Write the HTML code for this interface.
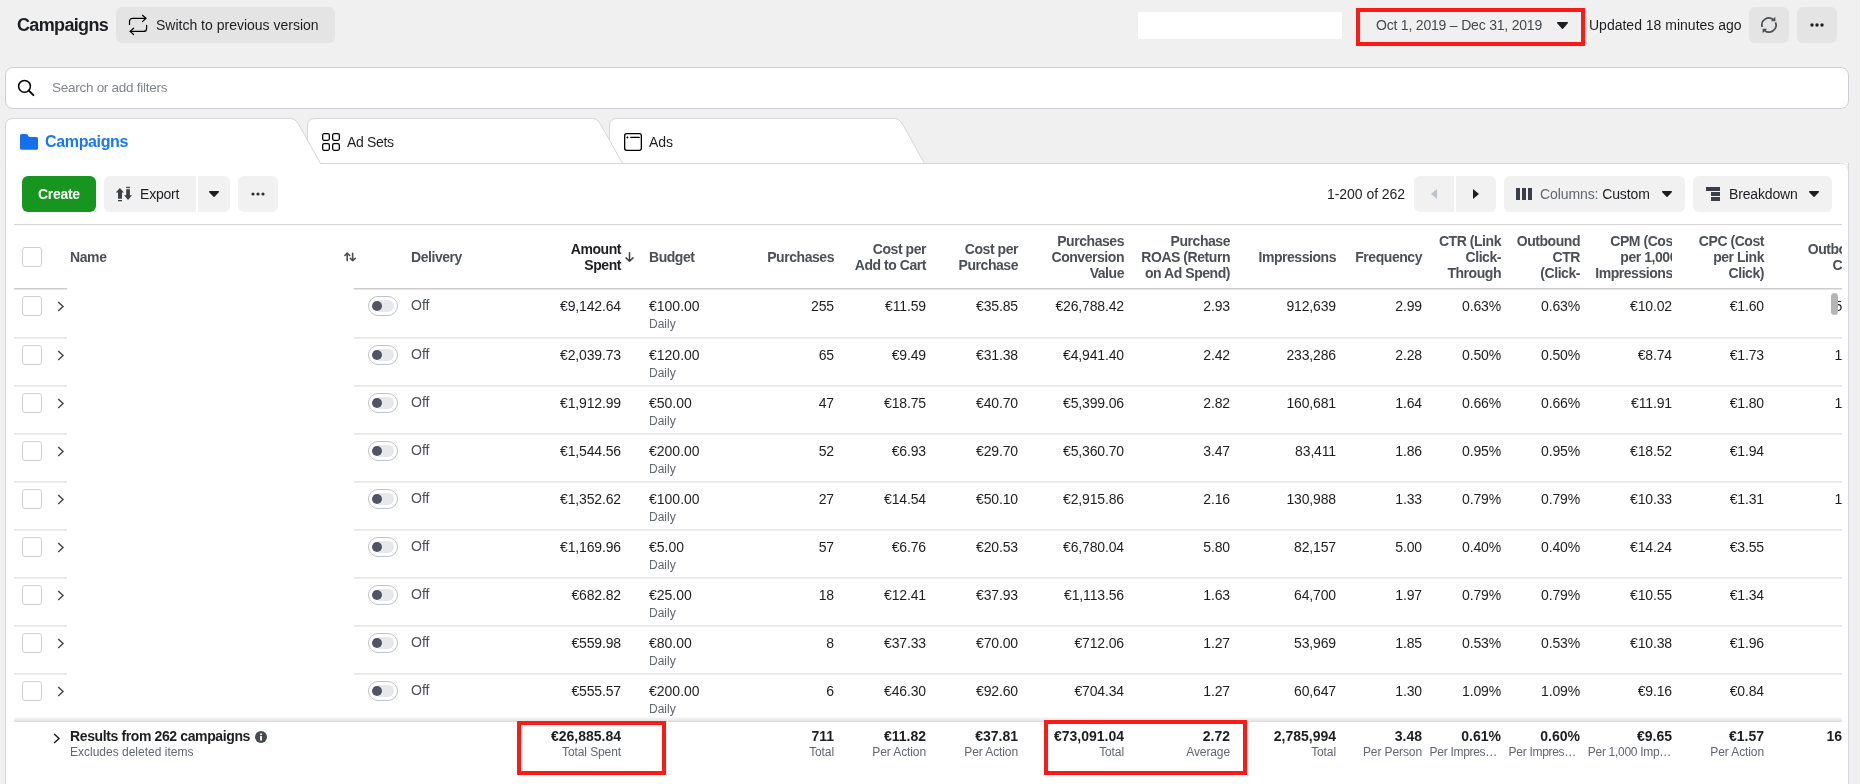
<!DOCTYPE html><html><head><meta charset="utf-8"><style>
html,body{margin:0;padding:0;}
body{width:1860px;height:784px;overflow:hidden;background:#f0f0f0;position:relative;font-family:'Liberation Sans', sans-serif;}
.t{position:absolute;white-space:nowrap;}
#root{position:absolute;left:0;top:0;width:1860px;height:784px;will-change:transform;}
.r{position:absolute;box-sizing:border-box;}
svg{position:absolute;overflow:visible;}
</style></head><body><div id="root">
<div class="t" style="left:17px;top:16px;font-size:18px;line-height:18px;font-weight:bold;color:#1c1e21;letter-spacing:-0.65px;">Campaigns</div>
<div class="r" style="left:116px;top:7px;width:219px;height:36px;background:#e4e4e4;border-radius:6px;"></div>
<svg style="left:128px;top:15px" width="20" height="20" viewBox="0 0 20 20"><g fill="none" stroke="#000" stroke-width="1.2" stroke-linecap="round" stroke-linejoin="round"><path d="M1.5 9.5 V6.3 A3 3 0 0 1 4.5 3.3 H17.8"/><path d="M14.5 0.3 L17.9 3.3 L14.5 6.6"/><path d="M18.6 10.3 V13.4 A3 3 0 0 1 15.6 16.4 H2.2"/><path d="M5.6 13.2 L2.1 16.4 L5.6 19.5"/></g></svg>
<div class="t" style="left:156px;top:18px;font-size:14px;line-height:14px;font-weight:normal;color:#1c1e21;">Switch to previous version</div>
<div class="r" style="left:1138px;top:12px;width:204px;height:27px;background:#fff;"></div>
<div class="t" style="left:1376px;top:18px;font-size:14px;line-height:14px;font-weight:normal;color:#444950;letter-spacing:-0.2px;">Oct 1, 2019 – Dec 31, 2019</div>
<svg style="left:1557px;top:22px" width="11" height="7" viewBox="0 0 11 7"><path d="M0.7 0.7 H10.3 L5.5 6.2 Z" fill="#1c1e21" stroke="#1c1e21" stroke-width="1.4" stroke-linejoin="round"/></svg>
<div class="r" style="left:1356px;top:8px;width:229px;height:38px;border:4px solid #fc1a17;"></div>
<div class="t" style="left:1589px;top:18px;font-size:14px;line-height:14px;font-weight:normal;color:#1c1e21;">Updated 18 minutes ago</div>
<div class="r" style="left:1749px;top:7px;width:40px;height:36px;background:#e4e4e4;border-radius:6px;"></div>
<svg style="left:1761px;top:17px" width="16" height="16" viewBox="0 0 16 16"><g fill="none" stroke="#4b4f56" stroke-width="1.7"><path d="M1.2 10 A7 7 0 0 1 12.4 2.6"/><path d="M14.5 5.4 A7 7 0 0 1 3.4 13.3"/></g><path d="M14.4 -0.3 V4.2 H9.9 Z" fill="#4b4f56"/><path d="M1.6 16.3 V11.8 H6.1 Z" fill="#4b4f56"/></svg>
<div class="r" style="left:1797px;top:7px;width:40px;height:36px;background:#e4e4e4;border-radius:6px;"></div>
<svg style="left:1810px;top:23px" width="14" height="4" viewBox="0 0 14 4"><g fill="#1c1e21"><circle cx="2" cy="2" r="1.7"/><circle cx="7" cy="2" r="1.7"/><circle cx="12" cy="2" r="1.7"/></g></svg>
<div class="r" style="left:5px;top:67px;width:1844px;height:42px;background:#fff;border:1px solid #ccd0d5;border-radius:8px;"></div>
<svg style="left:17px;top:79px" width="18" height="18" viewBox="0 0 18 18"><g fill="none" stroke="#000" stroke-linecap="round"><circle cx="7.5" cy="7.3" r="5.9" stroke-width="1.5"/><path d="M11.8 11.6 L16.4 16.2" stroke-width="1.9"/></g></svg>
<div class="t" style="left:52px;top:81px;font-size:13.5px;line-height:13.5px;font-weight:normal;color:#80858b;letter-spacing:-0.27px;">Search or add filters</div>
<svg style="left:0;top:0" width="1860" height="784">
<path d="M609.5 163.5 V126 Q609.5 118.5 617.0 118.5 H894.5 Q899.5 118.5 903.0 125 L924.5 163.5" fill="#fff" stroke="#d3d6da" stroke-width="1"/>
<path d="M307.5 163.5 V126 Q307.5 118.5 315.0 118.5 H592.5 Q597.5 118.5 601.0 125 L622.5 163.5" fill="#fff" stroke="#d3d6da" stroke-width="1"/>
</svg>
<div class="r" style="left:5px;top:163px;width:1844px;height:640px;background:#fff;border:1px solid #d3d6da;border-top:none;"></div>
<svg style="left:0;top:0" width="1860" height="784"><path d="M320 163.5 H1840.5 Q1848.5 163.5 1848.5 171.5 V784" fill="none" stroke="#d3d6da"/><path d="M1841 164 H1848 V171 Q1848 164 1841 164Z" fill="#f0f0f0"/></svg>
<svg style="left:0;top:0" width="1860" height="784">
<path d="M5.5 163.5 V126 Q5.5 118.5 13.0 118.5 H290.5 Q295.5 118.5 299.0 125 L320.5 163.5" fill="#fff" stroke="#d3d6da" stroke-width="1"/>
</svg>
<svg style="left:20px;top:134px" width="18" height="16" viewBox="0 0 18 16"><path d="M0 1.5 Q0 0 1.5 0 H6 Q6.8 0 7.3 0.6 L9 3 H16.5 Q18 3 18 4.5 V14.2 Q18 15.7 16.5 15.7 H1.5 Q0 15.7 0 14.2 Z" fill="#1670ee"/></svg>
<div class="t" style="left:45px;top:134px;font-size:16px;line-height:16px;font-weight:bold;color:#1877f2;letter-spacing:-0.35px;">Campaigns</div>
<svg style="left:322px;top:133px" width="18" height="18" viewBox="0 0 18 18"><g fill="none" stroke="#000" stroke-width="1.3"><rect x="0.65" y="0.65" width="6.7" height="6.7" rx="1.5"/><rect x="10.65" y="0.65" width="6.7" height="6.7" rx="1.5"/><rect x="0.65" y="10.65" width="6.7" height="6.7" rx="1.5"/><rect x="10.65" y="10.65" width="6.7" height="6.7" rx="1.5"/></g></svg>
<div class="t" style="left:347px;top:135px;font-size:14px;line-height:14px;font-weight:normal;color:#1c1e21;letter-spacing:-0.35px;">Ad Sets</div>
<svg style="left:624px;top:133px" width="18" height="18" viewBox="0 0 18 18"><g fill="none" stroke="#000" stroke-width="1.3" stroke-linecap="round"><rect x="0.65" y="0.65" width="16.7" height="16.7" rx="2"/><path d="M6.8 4.4 H15.2"/></g><path d="M3.4 3 L3.9 3.9 L4.8 4.4 L3.9 4.9 L3.4 5.8 L2.9 4.9 L2 4.4 L2.9 3.9 Z" fill="#000"/></svg>
<div class="t" style="left:649px;top:135px;font-size:14px;line-height:14px;font-weight:normal;color:#1c1e21;">Ads</div>
<div class="r" style="left:22px;top:176px;width:74px;height:36px;background:#16951f;border-radius:6px;"></div>
<div class="t" style="left:38px;top:187px;font-size:14px;line-height:14px;font-weight:bold;color:#fff;letter-spacing:-0.3px;">Create</div>
<div class="r" style="left:104px;top:176px;width:92px;height:36px;background:#f1f1f1;border-radius:6px 0 0 6px;"></div>
<div class="r" style="left:198px;top:176px;width:32px;height:36px;background:#f1f1f1;border-radius:0 6px 6px 0;"></div>
<div class="r" style="left:238px;top:176px;width:40px;height:36px;background:#f1f1f1;border-radius:6px;"></div>
<svg style="left:115px;top:187px" width="18" height="16" viewBox="0 0 18 16"><g fill="#3b3f46"><path d="M4.9 1 L8.9 5.6 H7 V11.75 H3 V5.6 H0.8 Z"/><rect x="3" y="13" width="4" height="1.3"/><rect x="11.2" y="-0.2" width="3.7" height="1.3"/><path d="M11.2 2.2 H14.9 V8.3 H17 L13.05 12.9 L9.1 8.3 H11.2 Z"/></g></svg>
<div class="t" style="left:140px;top:187px;font-size:14px;line-height:14px;font-weight:normal;color:#1c1e21;letter-spacing:-0.2px;">Export</div>
<svg style="left:209px;top:191px" width="10" height="6" viewBox="0 0 10 6"><path d="M0.7 0.7 H9.3 L5 5.3 Z" fill="#1c1e21" stroke="#1c1e21" stroke-width="1.4" stroke-linejoin="round"/></svg>
<svg style="left:251px;top:192px" width="14" height="4" viewBox="0 0 14 4"><g fill="#2b2f35"><circle cx="2" cy="2" r="1.6"/><circle cx="7" cy="2" r="1.6"/><circle cx="12" cy="2" r="1.6"/></g></svg>
<div class="t" style="left:1327px;top:187px;font-size:14px;line-height:14px;font-weight:normal;color:#1c1e21;letter-spacing:-0.05px;">1-200 of 262</div>
<div class="r" style="left:1414px;top:176px;width:40px;height:36px;background:#f1f1f1;border-radius:6px 0 0 6px;"></div>
<div class="r" style="left:1456px;top:176px;width:40px;height:36px;background:#f1f1f1;border-radius:0 6px 6px 0;"></div>
<svg style="left:1431px;top:189px" width="6" height="10" viewBox="0 0 6 10"><path d="M6 0 V10 L0 5 Z" fill="#bec3c9"/></svg>
<svg style="left:1473px;top:189px" width="6" height="10" viewBox="0 0 6 10"><path d="M0 0 V10 L6 5 Z" fill="#1c1e21"/></svg>
<div class="r" style="left:1504px;top:176px;width:181px;height:36px;background:#f1f1f1;border-radius:6px;"></div>
<svg style="left:1516px;top:188px" width="16" height="12" viewBox="0 0 16 12"><g fill="#393e47"><rect x="0" y="0" width="4" height="12"/><rect x="6" y="0" width="4" height="12"/><rect x="12" y="0" width="4" height="12"/></g></svg>
<div class="t" style="left:1540px;top:187px;font-size:14px;line-height:14px;font-weight:normal;color:#1c1e21;letter-spacing:-0.1px;"><span style="color:#606770">Columns:</span> Custom</div>
<svg style="left:1662px;top:191px" width="10" height="6" viewBox="0 0 10 6"><path d="M0.7 0.7 H9.3 L5 5.3 Z" fill="#1c1e21" stroke="#1c1e21" stroke-width="1.4" stroke-linejoin="round"/></svg>
<div class="r" style="left:1693px;top:176px;width:139px;height:36px;background:#f1f1f1;border-radius:6px;"></div>
<svg style="left:1706px;top:187px" width="14" height="14" viewBox="0 0 14 14"><g fill="#393e47"><rect x="0" y="0" width="14" height="4"/><rect x="5" y="5" width="9" height="4"/><rect x="5" y="10" width="9" height="4"/></g></svg>
<div class="t" style="left:1729px;top:187px;font-size:14px;line-height:14px;font-weight:normal;color:#1c1e21;letter-spacing:-0.15px;">Breakdown</div>
<svg style="left:1809px;top:191px" width="10" height="6" viewBox="0 0 10 6"><path d="M0.7 0.7 H9.3 L5 5.3 Z" fill="#1c1e21" stroke="#1c1e21" stroke-width="1.4" stroke-linejoin="round"/></svg>
<div class="r" style="left:14px;top:224px;width:1828px;height:1px;background:#d6d6d6;"></div>
<div class="r" style="left:22px;top:247px;width:20px;height:20px;border:1px solid #ccd0d5;border-radius:3px;background:#fff;"></div>
<div class="t" style="left:70px;top:250px;font-size:14px;line-height:14px;font-weight:bold;color:#4b4f56;letter-spacing:-0.4px;">Name</div>
<svg style="left:344px;top:252px" width="12" height="10" viewBox="0 0 12 10"><g fill="none" stroke="#4b4f56" stroke-width="1.6" stroke-linecap="round" stroke-linejoin="round"><path d="M3.2 8.6 V1.3 M0.9 3.5 L3.2 1.1 L5.7 3.5"/><path d="M8.65 1.3 V8.6 M6.3 6.3 L8.65 8.7 L11.2 6.3"/></g></svg>
<div class="t" style="left:411px;top:250px;font-size:14px;line-height:14px;font-weight:bold;color:#4b4f56;letter-spacing:-0.45px;">Delivery</div>
<div class="t" style="left:221px;width:400px;text-align:right;top:242px;font-size:14px;line-height:14px;font-weight:bold;color:#1c1e21;letter-spacing:-0.45px;">Amount</div>
<div class="t" style="left:221px;width:400px;text-align:right;top:258px;font-size:14px;line-height:14px;font-weight:bold;color:#1c1e21;letter-spacing:-0.45px;">Spent</div>
<svg style="left:625px;top:252px" width="9" height="11" viewBox="0 0 9 11"><g fill="none" stroke="#3f444b" stroke-width="1.5" stroke-linecap="round" stroke-linejoin="round"><path d="M4.5 0.8 V9.2 M1 5.9 L4.5 9.3 L8 5.9"/></g></svg>
<div class="t" style="left:649px;top:250px;font-size:14px;line-height:14px;font-weight:bold;color:#4b4f56;letter-spacing:-0.45px;">Budget</div>
<div class="t" style="left:434px;width:400px;text-align:right;top:250px;font-size:14px;line-height:14px;font-weight:bold;color:#4b4f56;letter-spacing:-0.45px;">Purchases</div>
<div class="t" style="left:526px;width:400px;text-align:right;top:242px;font-size:14px;line-height:14px;font-weight:bold;color:#4b4f56;letter-spacing:-0.45px;">Cost per</div>
<div class="t" style="left:526px;width:400px;text-align:right;top:258px;font-size:14px;line-height:14px;font-weight:bold;color:#4b4f56;letter-spacing:-0.45px;">Add to Cart</div>
<div class="t" style="left:618px;width:400px;text-align:right;top:242px;font-size:14px;line-height:14px;font-weight:bold;color:#4b4f56;letter-spacing:-0.45px;">Cost per</div>
<div class="t" style="left:618px;width:400px;text-align:right;top:258px;font-size:14px;line-height:14px;font-weight:bold;color:#4b4f56;letter-spacing:-0.45px;">Purchase</div>
<div class="t" style="left:724px;width:400px;text-align:right;top:234px;font-size:14px;line-height:14px;font-weight:bold;color:#4b4f56;letter-spacing:-0.45px;">Purchases</div>
<div class="t" style="left:724px;width:400px;text-align:right;top:250px;font-size:14px;line-height:14px;font-weight:bold;color:#4b4f56;letter-spacing:-0.45px;">Conversion</div>
<div class="t" style="left:724px;width:400px;text-align:right;top:266px;font-size:14px;line-height:14px;font-weight:bold;color:#4b4f56;letter-spacing:-0.45px;">Value</div>
<div class="t" style="left:830px;width:400px;text-align:right;top:234px;font-size:14px;line-height:14px;font-weight:bold;color:#4b4f56;letter-spacing:-0.45px;">Purchase</div>
<div class="t" style="left:830px;width:400px;text-align:right;top:250px;font-size:14px;line-height:14px;font-weight:bold;color:#4b4f56;letter-spacing:-0.45px;">ROAS (Return</div>
<div class="t" style="left:830px;width:400px;text-align:right;top:266px;font-size:14px;line-height:14px;font-weight:bold;color:#4b4f56;letter-spacing:-0.45px;">on Ad Spend)</div>
<div class="t" style="left:936px;width:400px;text-align:right;top:250px;font-size:14px;line-height:14px;font-weight:bold;color:#4b4f56;letter-spacing:-0.45px;">Impressions</div>
<div class="t" style="left:1022px;width:400px;text-align:right;top:250px;font-size:14px;line-height:14px;font-weight:bold;color:#4b4f56;letter-spacing:-0.45px;">Frequency</div>
<div class="t" style="left:1101px;width:400px;text-align:right;top:234px;font-size:14px;line-height:14px;font-weight:bold;color:#4b4f56;letter-spacing:-0.45px;">CTR (Link</div>
<div class="t" style="left:1101px;width:400px;text-align:right;top:250px;font-size:14px;line-height:14px;font-weight:bold;color:#4b4f56;letter-spacing:-0.45px;">Click-</div>
<div class="t" style="left:1101px;width:400px;text-align:right;top:266px;font-size:14px;line-height:14px;font-weight:bold;color:#4b4f56;letter-spacing:-0.45px;">Through</div>
<div class="t" style="left:1180px;width:400px;text-align:right;top:234px;font-size:14px;line-height:14px;font-weight:bold;color:#4b4f56;letter-spacing:-0.45px;">Outbound</div>
<div class="t" style="left:1180px;width:400px;text-align:right;top:250px;font-size:14px;line-height:14px;font-weight:bold;color:#4b4f56;letter-spacing:-0.45px;">CTR</div>
<div class="t" style="left:1180px;width:400px;text-align:right;top:266px;font-size:14px;line-height:14px;font-weight:bold;color:#4b4f56;letter-spacing:-0.45px;">(Click-</div>
<div style="position:absolute;left:1588px;top:228px;width:84px;height:60px;overflow:hidden">
<div class="t" style="left:-316px;width:400px;text-align:right;top:6px;font-size:14px;line-height:14px;font-weight:bold;color:#4b4f56;letter-spacing:-0.45px;transform:translateX(5px)">CPM (Cost</div>
<div class="t" style="left:-316px;width:400px;text-align:right;top:22px;font-size:14px;line-height:14px;font-weight:bold;color:#4b4f56;letter-spacing:-0.45px;transform:translateX(5px)">per 1,000</div>
<div class="t" style="left:-316px;width:400px;text-align:right;top:38px;font-size:14px;line-height:14px;font-weight:bold;color:#4b4f56;letter-spacing:-0.45px;transform:translateX(5px)">Impressions)</div>
</div>
<div class="t" style="left:1364px;width:400px;text-align:right;top:234px;font-size:14px;line-height:14px;font-weight:bold;color:#4b4f56;letter-spacing:-0.45px;">CPC (Cost</div>
<div class="t" style="left:1364px;width:400px;text-align:right;top:250px;font-size:14px;line-height:14px;font-weight:bold;color:#4b4f56;letter-spacing:-0.45px;">per Link</div>
<div class="t" style="left:1364px;width:400px;text-align:right;top:266px;font-size:14px;line-height:14px;font-weight:bold;color:#4b4f56;letter-spacing:-0.45px;">Click)</div>
<div style="position:absolute;left:1772px;top:228px;width:70px;height:60px;overflow:hidden">
<div class="t" style="left:-301px;width:400px;text-align:right;top:14px;font-size:14px;line-height:14px;font-weight:bold;color:#4b4f56;letter-spacing:-0.45px;">Outbound</div>
<div class="t" style="left:-301px;width:400px;text-align:right;top:30px;font-size:14px;line-height:14px;font-weight:bold;color:#4b4f56;letter-spacing:-0.45px;">Clicks</div>
</div>
<div class="r" style="left:14px;top:288px;width:1828px;height:1px;background:#cdcdcd;"></div>
<div class="r" style="left:14px;top:289px;width:1828px;height:1px;background:#e6e6e6;"></div>
<div class="r" style="left:22px;top:296px;width:20px;height:20px;border:1px solid #ccd0d5;border-radius:3px;background:#fff;"></div>
<svg style="left:57px;top:301px" width="8" height="11" viewBox="0 0 8 11"><path d="M1.2 1 L6 5.5 L1.2 10" fill="none" stroke="#444950" stroke-width="1.5"/></svg>
<div class="r" style="left:368px;top:296px;width:30px;height:20px;border:1px solid #bec3c9;border-radius:10px;background:#fff;"></div>
<div class="r" style="left:374px;top:300px;width:20px;height:12px;background:#e6e8eb;border-radius:6px;"></div>
<div class="r" style="left:372px;top:301px;width:10px;height:10px;background:#4f5661;border-radius:50%;"></div>
<div class="t" style="left:411px;top:298px;font-size:14px;line-height:14px;font-weight:normal;color:#4b4f56;">Off</div>
<div class="t" style="left:221px;width:400px;text-align:right;top:299px;font-size:14px;line-height:14px;font-weight:normal;color:#1c1e21;letter-spacing:-0.15px;">€9,142.64</div>
<div class="t" style="left:649px;top:299px;font-size:14px;line-height:14px;font-weight:normal;color:#1c1e21;">€100.00</div>
<div class="t" style="left:649px;top:318px;font-size:12px;line-height:12px;font-weight:normal;color:#606770;">Daily</div>
<div class="t" style="left:434px;width:400px;text-align:right;top:299px;font-size:14px;line-height:14px;font-weight:normal;color:#1c1e21;letter-spacing:-0.15px;">255</div>
<div class="t" style="left:526px;width:400px;text-align:right;top:299px;font-size:14px;line-height:14px;font-weight:normal;color:#1c1e21;letter-spacing:-0.15px;">€11.59</div>
<div class="t" style="left:618px;width:400px;text-align:right;top:299px;font-size:14px;line-height:14px;font-weight:normal;color:#1c1e21;letter-spacing:-0.15px;">€35.85</div>
<div class="t" style="left:724px;width:400px;text-align:right;top:299px;font-size:14px;line-height:14px;font-weight:normal;color:#1c1e21;letter-spacing:-0.15px;">€26,788.42</div>
<div class="t" style="left:830px;width:400px;text-align:right;top:299px;font-size:14px;line-height:14px;font-weight:normal;color:#1c1e21;letter-spacing:-0.15px;">2.93</div>
<div class="t" style="left:936px;width:400px;text-align:right;top:299px;font-size:14px;line-height:14px;font-weight:normal;color:#1c1e21;letter-spacing:-0.15px;">912,639</div>
<div class="t" style="left:1022px;width:400px;text-align:right;top:299px;font-size:14px;line-height:14px;font-weight:normal;color:#1c1e21;letter-spacing:-0.15px;">2.99</div>
<div class="t" style="left:1101px;width:400px;text-align:right;top:299px;font-size:14px;line-height:14px;font-weight:normal;color:#1c1e21;letter-spacing:-0.15px;">0.63%</div>
<div class="t" style="left:1180px;width:400px;text-align:right;top:299px;font-size:14px;line-height:14px;font-weight:normal;color:#1c1e21;letter-spacing:-0.15px;">0.63%</div>
<div class="t" style="left:1272px;width:400px;text-align:right;top:299px;font-size:14px;line-height:14px;font-weight:normal;color:#1c1e21;letter-spacing:-0.15px;">€10.02</div>
<div class="t" style="left:1364px;width:400px;text-align:right;top:299px;font-size:14px;line-height:14px;font-weight:normal;color:#1c1e21;letter-spacing:-0.15px;">€1.60</div>
<div style="position:absolute;left:1772px;top:288px;width:70px;height:40px;overflow:hidden"><div class="t" style="left:0;width:78px;text-align:right;top:11px;font-size:14px;line-height:14px;color:#1c1e21">56</div></div>
<div class="r" style="left:14px;top:337px;width:1828px;height:1px;background:#e5e5e5;"></div>
<div class="r" style="left:14px;top:338px;width:1828px;height:1px;background:#ededed;"></div>
<div class="r" style="left:22px;top:345px;width:20px;height:20px;border:1px solid #ccd0d5;border-radius:3px;background:#fff;"></div>
<svg style="left:57px;top:350px" width="8" height="11" viewBox="0 0 8 11"><path d="M1.2 1 L6 5.5 L1.2 10" fill="none" stroke="#444950" stroke-width="1.5"/></svg>
<div class="r" style="left:368px;top:345px;width:30px;height:20px;border:1px solid #bec3c9;border-radius:10px;background:#fff;"></div>
<div class="r" style="left:374px;top:349px;width:20px;height:12px;background:#e6e8eb;border-radius:6px;"></div>
<div class="r" style="left:372px;top:350px;width:10px;height:10px;background:#4f5661;border-radius:50%;"></div>
<div class="t" style="left:411px;top:347px;font-size:14px;line-height:14px;font-weight:normal;color:#4b4f56;">Off</div>
<div class="t" style="left:221px;width:400px;text-align:right;top:348px;font-size:14px;line-height:14px;font-weight:normal;color:#1c1e21;letter-spacing:-0.15px;">€2,039.73</div>
<div class="t" style="left:649px;top:348px;font-size:14px;line-height:14px;font-weight:normal;color:#1c1e21;">€120.00</div>
<div class="t" style="left:649px;top:367px;font-size:12px;line-height:12px;font-weight:normal;color:#606770;">Daily</div>
<div class="t" style="left:434px;width:400px;text-align:right;top:348px;font-size:14px;line-height:14px;font-weight:normal;color:#1c1e21;letter-spacing:-0.15px;">65</div>
<div class="t" style="left:526px;width:400px;text-align:right;top:348px;font-size:14px;line-height:14px;font-weight:normal;color:#1c1e21;letter-spacing:-0.15px;">€9.49</div>
<div class="t" style="left:618px;width:400px;text-align:right;top:348px;font-size:14px;line-height:14px;font-weight:normal;color:#1c1e21;letter-spacing:-0.15px;">€31.38</div>
<div class="t" style="left:724px;width:400px;text-align:right;top:348px;font-size:14px;line-height:14px;font-weight:normal;color:#1c1e21;letter-spacing:-0.15px;">€4,941.40</div>
<div class="t" style="left:830px;width:400px;text-align:right;top:348px;font-size:14px;line-height:14px;font-weight:normal;color:#1c1e21;letter-spacing:-0.15px;">2.42</div>
<div class="t" style="left:936px;width:400px;text-align:right;top:348px;font-size:14px;line-height:14px;font-weight:normal;color:#1c1e21;letter-spacing:-0.15px;">233,286</div>
<div class="t" style="left:1022px;width:400px;text-align:right;top:348px;font-size:14px;line-height:14px;font-weight:normal;color:#1c1e21;letter-spacing:-0.15px;">2.28</div>
<div class="t" style="left:1101px;width:400px;text-align:right;top:348px;font-size:14px;line-height:14px;font-weight:normal;color:#1c1e21;letter-spacing:-0.15px;">0.50%</div>
<div class="t" style="left:1180px;width:400px;text-align:right;top:348px;font-size:14px;line-height:14px;font-weight:normal;color:#1c1e21;letter-spacing:-0.15px;">0.50%</div>
<div class="t" style="left:1272px;width:400px;text-align:right;top:348px;font-size:14px;line-height:14px;font-weight:normal;color:#1c1e21;letter-spacing:-0.15px;">€8.74</div>
<div class="t" style="left:1364px;width:400px;text-align:right;top:348px;font-size:14px;line-height:14px;font-weight:normal;color:#1c1e21;letter-spacing:-0.15px;">€1.73</div>
<div style="position:absolute;left:1772px;top:337px;width:70px;height:40px;overflow:hidden"><div class="t" style="left:0;width:78px;text-align:right;top:11px;font-size:14px;line-height:14px;color:#1c1e21">16</div></div>
<div class="r" style="left:14px;top:385px;width:1828px;height:1px;background:#e5e5e5;"></div>
<div class="r" style="left:14px;top:386px;width:1828px;height:1px;background:#ededed;"></div>
<div class="r" style="left:22px;top:393px;width:20px;height:20px;border:1px solid #ccd0d5;border-radius:3px;background:#fff;"></div>
<svg style="left:57px;top:398px" width="8" height="11" viewBox="0 0 8 11"><path d="M1.2 1 L6 5.5 L1.2 10" fill="none" stroke="#444950" stroke-width="1.5"/></svg>
<div class="r" style="left:368px;top:393px;width:30px;height:20px;border:1px solid #bec3c9;border-radius:10px;background:#fff;"></div>
<div class="r" style="left:374px;top:397px;width:20px;height:12px;background:#e6e8eb;border-radius:6px;"></div>
<div class="r" style="left:372px;top:398px;width:10px;height:10px;background:#4f5661;border-radius:50%;"></div>
<div class="t" style="left:411px;top:395px;font-size:14px;line-height:14px;font-weight:normal;color:#4b4f56;">Off</div>
<div class="t" style="left:221px;width:400px;text-align:right;top:396px;font-size:14px;line-height:14px;font-weight:normal;color:#1c1e21;letter-spacing:-0.15px;">€1,912.99</div>
<div class="t" style="left:649px;top:396px;font-size:14px;line-height:14px;font-weight:normal;color:#1c1e21;">€50.00</div>
<div class="t" style="left:649px;top:415px;font-size:12px;line-height:12px;font-weight:normal;color:#606770;">Daily</div>
<div class="t" style="left:434px;width:400px;text-align:right;top:396px;font-size:14px;line-height:14px;font-weight:normal;color:#1c1e21;letter-spacing:-0.15px;">47</div>
<div class="t" style="left:526px;width:400px;text-align:right;top:396px;font-size:14px;line-height:14px;font-weight:normal;color:#1c1e21;letter-spacing:-0.15px;">€18.75</div>
<div class="t" style="left:618px;width:400px;text-align:right;top:396px;font-size:14px;line-height:14px;font-weight:normal;color:#1c1e21;letter-spacing:-0.15px;">€40.70</div>
<div class="t" style="left:724px;width:400px;text-align:right;top:396px;font-size:14px;line-height:14px;font-weight:normal;color:#1c1e21;letter-spacing:-0.15px;">€5,399.06</div>
<div class="t" style="left:830px;width:400px;text-align:right;top:396px;font-size:14px;line-height:14px;font-weight:normal;color:#1c1e21;letter-spacing:-0.15px;">2.82</div>
<div class="t" style="left:936px;width:400px;text-align:right;top:396px;font-size:14px;line-height:14px;font-weight:normal;color:#1c1e21;letter-spacing:-0.15px;">160,681</div>
<div class="t" style="left:1022px;width:400px;text-align:right;top:396px;font-size:14px;line-height:14px;font-weight:normal;color:#1c1e21;letter-spacing:-0.15px;">1.64</div>
<div class="t" style="left:1101px;width:400px;text-align:right;top:396px;font-size:14px;line-height:14px;font-weight:normal;color:#1c1e21;letter-spacing:-0.15px;">0.66%</div>
<div class="t" style="left:1180px;width:400px;text-align:right;top:396px;font-size:14px;line-height:14px;font-weight:normal;color:#1c1e21;letter-spacing:-0.15px;">0.66%</div>
<div class="t" style="left:1272px;width:400px;text-align:right;top:396px;font-size:14px;line-height:14px;font-weight:normal;color:#1c1e21;letter-spacing:-0.15px;">€11.91</div>
<div class="t" style="left:1364px;width:400px;text-align:right;top:396px;font-size:14px;line-height:14px;font-weight:normal;color:#1c1e21;letter-spacing:-0.15px;">€1.80</div>
<div style="position:absolute;left:1772px;top:385px;width:70px;height:40px;overflow:hidden"><div class="t" style="left:0;width:78px;text-align:right;top:11px;font-size:14px;line-height:14px;color:#1c1e21">16</div></div>
<div class="r" style="left:14px;top:433px;width:1828px;height:1px;background:#e5e5e5;"></div>
<div class="r" style="left:14px;top:434px;width:1828px;height:1px;background:#ededed;"></div>
<div class="r" style="left:22px;top:441px;width:20px;height:20px;border:1px solid #ccd0d5;border-radius:3px;background:#fff;"></div>
<svg style="left:57px;top:446px" width="8" height="11" viewBox="0 0 8 11"><path d="M1.2 1 L6 5.5 L1.2 10" fill="none" stroke="#444950" stroke-width="1.5"/></svg>
<div class="r" style="left:368px;top:441px;width:30px;height:20px;border:1px solid #bec3c9;border-radius:10px;background:#fff;"></div>
<div class="r" style="left:374px;top:445px;width:20px;height:12px;background:#e6e8eb;border-radius:6px;"></div>
<div class="r" style="left:372px;top:446px;width:10px;height:10px;background:#4f5661;border-radius:50%;"></div>
<div class="t" style="left:411px;top:443px;font-size:14px;line-height:14px;font-weight:normal;color:#4b4f56;">Off</div>
<div class="t" style="left:221px;width:400px;text-align:right;top:444px;font-size:14px;line-height:14px;font-weight:normal;color:#1c1e21;letter-spacing:-0.15px;">€1,544.56</div>
<div class="t" style="left:649px;top:444px;font-size:14px;line-height:14px;font-weight:normal;color:#1c1e21;">€200.00</div>
<div class="t" style="left:649px;top:463px;font-size:12px;line-height:12px;font-weight:normal;color:#606770;">Daily</div>
<div class="t" style="left:434px;width:400px;text-align:right;top:444px;font-size:14px;line-height:14px;font-weight:normal;color:#1c1e21;letter-spacing:-0.15px;">52</div>
<div class="t" style="left:526px;width:400px;text-align:right;top:444px;font-size:14px;line-height:14px;font-weight:normal;color:#1c1e21;letter-spacing:-0.15px;">€6.93</div>
<div class="t" style="left:618px;width:400px;text-align:right;top:444px;font-size:14px;line-height:14px;font-weight:normal;color:#1c1e21;letter-spacing:-0.15px;">€29.70</div>
<div class="t" style="left:724px;width:400px;text-align:right;top:444px;font-size:14px;line-height:14px;font-weight:normal;color:#1c1e21;letter-spacing:-0.15px;">€5,360.70</div>
<div class="t" style="left:830px;width:400px;text-align:right;top:444px;font-size:14px;line-height:14px;font-weight:normal;color:#1c1e21;letter-spacing:-0.15px;">3.47</div>
<div class="t" style="left:936px;width:400px;text-align:right;top:444px;font-size:14px;line-height:14px;font-weight:normal;color:#1c1e21;letter-spacing:-0.15px;">83,411</div>
<div class="t" style="left:1022px;width:400px;text-align:right;top:444px;font-size:14px;line-height:14px;font-weight:normal;color:#1c1e21;letter-spacing:-0.15px;">1.86</div>
<div class="t" style="left:1101px;width:400px;text-align:right;top:444px;font-size:14px;line-height:14px;font-weight:normal;color:#1c1e21;letter-spacing:-0.15px;">0.95%</div>
<div class="t" style="left:1180px;width:400px;text-align:right;top:444px;font-size:14px;line-height:14px;font-weight:normal;color:#1c1e21;letter-spacing:-0.15px;">0.95%</div>
<div class="t" style="left:1272px;width:400px;text-align:right;top:444px;font-size:14px;line-height:14px;font-weight:normal;color:#1c1e21;letter-spacing:-0.15px;">€18.52</div>
<div class="t" style="left:1364px;width:400px;text-align:right;top:444px;font-size:14px;line-height:14px;font-weight:normal;color:#1c1e21;letter-spacing:-0.15px;">€1.94</div>
<div class="r" style="left:14px;top:481px;width:1828px;height:1px;background:#e5e5e5;"></div>
<div class="r" style="left:14px;top:482px;width:1828px;height:1px;background:#ededed;"></div>
<div class="r" style="left:22px;top:489px;width:20px;height:20px;border:1px solid #ccd0d5;border-radius:3px;background:#fff;"></div>
<svg style="left:57px;top:494px" width="8" height="11" viewBox="0 0 8 11"><path d="M1.2 1 L6 5.5 L1.2 10" fill="none" stroke="#444950" stroke-width="1.5"/></svg>
<div class="r" style="left:368px;top:489px;width:30px;height:20px;border:1px solid #bec3c9;border-radius:10px;background:#fff;"></div>
<div class="r" style="left:374px;top:493px;width:20px;height:12px;background:#e6e8eb;border-radius:6px;"></div>
<div class="r" style="left:372px;top:494px;width:10px;height:10px;background:#4f5661;border-radius:50%;"></div>
<div class="t" style="left:411px;top:491px;font-size:14px;line-height:14px;font-weight:normal;color:#4b4f56;">Off</div>
<div class="t" style="left:221px;width:400px;text-align:right;top:492px;font-size:14px;line-height:14px;font-weight:normal;color:#1c1e21;letter-spacing:-0.15px;">€1,352.62</div>
<div class="t" style="left:649px;top:492px;font-size:14px;line-height:14px;font-weight:normal;color:#1c1e21;">€100.00</div>
<div class="t" style="left:649px;top:511px;font-size:12px;line-height:12px;font-weight:normal;color:#606770;">Daily</div>
<div class="t" style="left:434px;width:400px;text-align:right;top:492px;font-size:14px;line-height:14px;font-weight:normal;color:#1c1e21;letter-spacing:-0.15px;">27</div>
<div class="t" style="left:526px;width:400px;text-align:right;top:492px;font-size:14px;line-height:14px;font-weight:normal;color:#1c1e21;letter-spacing:-0.15px;">€14.54</div>
<div class="t" style="left:618px;width:400px;text-align:right;top:492px;font-size:14px;line-height:14px;font-weight:normal;color:#1c1e21;letter-spacing:-0.15px;">€50.10</div>
<div class="t" style="left:724px;width:400px;text-align:right;top:492px;font-size:14px;line-height:14px;font-weight:normal;color:#1c1e21;letter-spacing:-0.15px;">€2,915.86</div>
<div class="t" style="left:830px;width:400px;text-align:right;top:492px;font-size:14px;line-height:14px;font-weight:normal;color:#1c1e21;letter-spacing:-0.15px;">2.16</div>
<div class="t" style="left:936px;width:400px;text-align:right;top:492px;font-size:14px;line-height:14px;font-weight:normal;color:#1c1e21;letter-spacing:-0.15px;">130,988</div>
<div class="t" style="left:1022px;width:400px;text-align:right;top:492px;font-size:14px;line-height:14px;font-weight:normal;color:#1c1e21;letter-spacing:-0.15px;">1.33</div>
<div class="t" style="left:1101px;width:400px;text-align:right;top:492px;font-size:14px;line-height:14px;font-weight:normal;color:#1c1e21;letter-spacing:-0.15px;">0.79%</div>
<div class="t" style="left:1180px;width:400px;text-align:right;top:492px;font-size:14px;line-height:14px;font-weight:normal;color:#1c1e21;letter-spacing:-0.15px;">0.79%</div>
<div class="t" style="left:1272px;width:400px;text-align:right;top:492px;font-size:14px;line-height:14px;font-weight:normal;color:#1c1e21;letter-spacing:-0.15px;">€10.33</div>
<div class="t" style="left:1364px;width:400px;text-align:right;top:492px;font-size:14px;line-height:14px;font-weight:normal;color:#1c1e21;letter-spacing:-0.15px;">€1.31</div>
<div style="position:absolute;left:1772px;top:481px;width:70px;height:40px;overflow:hidden"><div class="t" style="left:0;width:78px;text-align:right;top:11px;font-size:14px;line-height:14px;color:#1c1e21">16</div></div>
<div class="r" style="left:14px;top:529px;width:1828px;height:1px;background:#e5e5e5;"></div>
<div class="r" style="left:14px;top:530px;width:1828px;height:1px;background:#ededed;"></div>
<div class="r" style="left:22px;top:537px;width:20px;height:20px;border:1px solid #ccd0d5;border-radius:3px;background:#fff;"></div>
<svg style="left:57px;top:542px" width="8" height="11" viewBox="0 0 8 11"><path d="M1.2 1 L6 5.5 L1.2 10" fill="none" stroke="#444950" stroke-width="1.5"/></svg>
<div class="r" style="left:368px;top:537px;width:30px;height:20px;border:1px solid #bec3c9;border-radius:10px;background:#fff;"></div>
<div class="r" style="left:374px;top:541px;width:20px;height:12px;background:#e6e8eb;border-radius:6px;"></div>
<div class="r" style="left:372px;top:542px;width:10px;height:10px;background:#4f5661;border-radius:50%;"></div>
<div class="t" style="left:411px;top:539px;font-size:14px;line-height:14px;font-weight:normal;color:#4b4f56;">Off</div>
<div class="t" style="left:221px;width:400px;text-align:right;top:540px;font-size:14px;line-height:14px;font-weight:normal;color:#1c1e21;letter-spacing:-0.15px;">€1,169.96</div>
<div class="t" style="left:649px;top:540px;font-size:14px;line-height:14px;font-weight:normal;color:#1c1e21;">€5.00</div>
<div class="t" style="left:649px;top:559px;font-size:12px;line-height:12px;font-weight:normal;color:#606770;">Daily</div>
<div class="t" style="left:434px;width:400px;text-align:right;top:540px;font-size:14px;line-height:14px;font-weight:normal;color:#1c1e21;letter-spacing:-0.15px;">57</div>
<div class="t" style="left:526px;width:400px;text-align:right;top:540px;font-size:14px;line-height:14px;font-weight:normal;color:#1c1e21;letter-spacing:-0.15px;">€6.76</div>
<div class="t" style="left:618px;width:400px;text-align:right;top:540px;font-size:14px;line-height:14px;font-weight:normal;color:#1c1e21;letter-spacing:-0.15px;">€20.53</div>
<div class="t" style="left:724px;width:400px;text-align:right;top:540px;font-size:14px;line-height:14px;font-weight:normal;color:#1c1e21;letter-spacing:-0.15px;">€6,780.04</div>
<div class="t" style="left:830px;width:400px;text-align:right;top:540px;font-size:14px;line-height:14px;font-weight:normal;color:#1c1e21;letter-spacing:-0.15px;">5.80</div>
<div class="t" style="left:936px;width:400px;text-align:right;top:540px;font-size:14px;line-height:14px;font-weight:normal;color:#1c1e21;letter-spacing:-0.15px;">82,157</div>
<div class="t" style="left:1022px;width:400px;text-align:right;top:540px;font-size:14px;line-height:14px;font-weight:normal;color:#1c1e21;letter-spacing:-0.15px;">5.00</div>
<div class="t" style="left:1101px;width:400px;text-align:right;top:540px;font-size:14px;line-height:14px;font-weight:normal;color:#1c1e21;letter-spacing:-0.15px;">0.40%</div>
<div class="t" style="left:1180px;width:400px;text-align:right;top:540px;font-size:14px;line-height:14px;font-weight:normal;color:#1c1e21;letter-spacing:-0.15px;">0.40%</div>
<div class="t" style="left:1272px;width:400px;text-align:right;top:540px;font-size:14px;line-height:14px;font-weight:normal;color:#1c1e21;letter-spacing:-0.15px;">€14.24</div>
<div class="t" style="left:1364px;width:400px;text-align:right;top:540px;font-size:14px;line-height:14px;font-weight:normal;color:#1c1e21;letter-spacing:-0.15px;">€3.55</div>
<div class="r" style="left:14px;top:577px;width:1828px;height:1px;background:#e5e5e5;"></div>
<div class="r" style="left:14px;top:578px;width:1828px;height:1px;background:#ededed;"></div>
<div class="r" style="left:22px;top:585px;width:20px;height:20px;border:1px solid #ccd0d5;border-radius:3px;background:#fff;"></div>
<svg style="left:57px;top:590px" width="8" height="11" viewBox="0 0 8 11"><path d="M1.2 1 L6 5.5 L1.2 10" fill="none" stroke="#444950" stroke-width="1.5"/></svg>
<div class="r" style="left:368px;top:585px;width:30px;height:20px;border:1px solid #bec3c9;border-radius:10px;background:#fff;"></div>
<div class="r" style="left:374px;top:589px;width:20px;height:12px;background:#e6e8eb;border-radius:6px;"></div>
<div class="r" style="left:372px;top:590px;width:10px;height:10px;background:#4f5661;border-radius:50%;"></div>
<div class="t" style="left:411px;top:587px;font-size:14px;line-height:14px;font-weight:normal;color:#4b4f56;">Off</div>
<div class="t" style="left:221px;width:400px;text-align:right;top:588px;font-size:14px;line-height:14px;font-weight:normal;color:#1c1e21;letter-spacing:-0.15px;">€682.82</div>
<div class="t" style="left:649px;top:588px;font-size:14px;line-height:14px;font-weight:normal;color:#1c1e21;">€25.00</div>
<div class="t" style="left:649px;top:607px;font-size:12px;line-height:12px;font-weight:normal;color:#606770;">Daily</div>
<div class="t" style="left:434px;width:400px;text-align:right;top:588px;font-size:14px;line-height:14px;font-weight:normal;color:#1c1e21;letter-spacing:-0.15px;">18</div>
<div class="t" style="left:526px;width:400px;text-align:right;top:588px;font-size:14px;line-height:14px;font-weight:normal;color:#1c1e21;letter-spacing:-0.15px;">€12.41</div>
<div class="t" style="left:618px;width:400px;text-align:right;top:588px;font-size:14px;line-height:14px;font-weight:normal;color:#1c1e21;letter-spacing:-0.15px;">€37.93</div>
<div class="t" style="left:724px;width:400px;text-align:right;top:588px;font-size:14px;line-height:14px;font-weight:normal;color:#1c1e21;letter-spacing:-0.15px;">€1,113.56</div>
<div class="t" style="left:830px;width:400px;text-align:right;top:588px;font-size:14px;line-height:14px;font-weight:normal;color:#1c1e21;letter-spacing:-0.15px;">1.63</div>
<div class="t" style="left:936px;width:400px;text-align:right;top:588px;font-size:14px;line-height:14px;font-weight:normal;color:#1c1e21;letter-spacing:-0.15px;">64,700</div>
<div class="t" style="left:1022px;width:400px;text-align:right;top:588px;font-size:14px;line-height:14px;font-weight:normal;color:#1c1e21;letter-spacing:-0.15px;">1.97</div>
<div class="t" style="left:1101px;width:400px;text-align:right;top:588px;font-size:14px;line-height:14px;font-weight:normal;color:#1c1e21;letter-spacing:-0.15px;">0.79%</div>
<div class="t" style="left:1180px;width:400px;text-align:right;top:588px;font-size:14px;line-height:14px;font-weight:normal;color:#1c1e21;letter-spacing:-0.15px;">0.79%</div>
<div class="t" style="left:1272px;width:400px;text-align:right;top:588px;font-size:14px;line-height:14px;font-weight:normal;color:#1c1e21;letter-spacing:-0.15px;">€10.55</div>
<div class="t" style="left:1364px;width:400px;text-align:right;top:588px;font-size:14px;line-height:14px;font-weight:normal;color:#1c1e21;letter-spacing:-0.15px;">€1.34</div>
<div class="r" style="left:14px;top:625px;width:1828px;height:1px;background:#e5e5e5;"></div>
<div class="r" style="left:14px;top:626px;width:1828px;height:1px;background:#ededed;"></div>
<div class="r" style="left:22px;top:633px;width:20px;height:20px;border:1px solid #ccd0d5;border-radius:3px;background:#fff;"></div>
<svg style="left:57px;top:638px" width="8" height="11" viewBox="0 0 8 11"><path d="M1.2 1 L6 5.5 L1.2 10" fill="none" stroke="#444950" stroke-width="1.5"/></svg>
<div class="r" style="left:368px;top:633px;width:30px;height:20px;border:1px solid #bec3c9;border-radius:10px;background:#fff;"></div>
<div class="r" style="left:374px;top:637px;width:20px;height:12px;background:#e6e8eb;border-radius:6px;"></div>
<div class="r" style="left:372px;top:638px;width:10px;height:10px;background:#4f5661;border-radius:50%;"></div>
<div class="t" style="left:411px;top:635px;font-size:14px;line-height:14px;font-weight:normal;color:#4b4f56;">Off</div>
<div class="t" style="left:221px;width:400px;text-align:right;top:636px;font-size:14px;line-height:14px;font-weight:normal;color:#1c1e21;letter-spacing:-0.15px;">€559.98</div>
<div class="t" style="left:649px;top:636px;font-size:14px;line-height:14px;font-weight:normal;color:#1c1e21;">€80.00</div>
<div class="t" style="left:649px;top:655px;font-size:12px;line-height:12px;font-weight:normal;color:#606770;">Daily</div>
<div class="t" style="left:434px;width:400px;text-align:right;top:636px;font-size:14px;line-height:14px;font-weight:normal;color:#1c1e21;letter-spacing:-0.15px;">8</div>
<div class="t" style="left:526px;width:400px;text-align:right;top:636px;font-size:14px;line-height:14px;font-weight:normal;color:#1c1e21;letter-spacing:-0.15px;">€37.33</div>
<div class="t" style="left:618px;width:400px;text-align:right;top:636px;font-size:14px;line-height:14px;font-weight:normal;color:#1c1e21;letter-spacing:-0.15px;">€70.00</div>
<div class="t" style="left:724px;width:400px;text-align:right;top:636px;font-size:14px;line-height:14px;font-weight:normal;color:#1c1e21;letter-spacing:-0.15px;">€712.06</div>
<div class="t" style="left:830px;width:400px;text-align:right;top:636px;font-size:14px;line-height:14px;font-weight:normal;color:#1c1e21;letter-spacing:-0.15px;">1.27</div>
<div class="t" style="left:936px;width:400px;text-align:right;top:636px;font-size:14px;line-height:14px;font-weight:normal;color:#1c1e21;letter-spacing:-0.15px;">53,969</div>
<div class="t" style="left:1022px;width:400px;text-align:right;top:636px;font-size:14px;line-height:14px;font-weight:normal;color:#1c1e21;letter-spacing:-0.15px;">1.85</div>
<div class="t" style="left:1101px;width:400px;text-align:right;top:636px;font-size:14px;line-height:14px;font-weight:normal;color:#1c1e21;letter-spacing:-0.15px;">0.53%</div>
<div class="t" style="left:1180px;width:400px;text-align:right;top:636px;font-size:14px;line-height:14px;font-weight:normal;color:#1c1e21;letter-spacing:-0.15px;">0.53%</div>
<div class="t" style="left:1272px;width:400px;text-align:right;top:636px;font-size:14px;line-height:14px;font-weight:normal;color:#1c1e21;letter-spacing:-0.15px;">€10.38</div>
<div class="t" style="left:1364px;width:400px;text-align:right;top:636px;font-size:14px;line-height:14px;font-weight:normal;color:#1c1e21;letter-spacing:-0.15px;">€1.96</div>
<div class="r" style="left:14px;top:673px;width:1828px;height:1px;background:#e5e5e5;"></div>
<div class="r" style="left:14px;top:674px;width:1828px;height:1px;background:#ededed;"></div>
<div class="r" style="left:22px;top:681px;width:20px;height:20px;border:1px solid #ccd0d5;border-radius:3px;background:#fff;"></div>
<svg style="left:57px;top:686px" width="8" height="11" viewBox="0 0 8 11"><path d="M1.2 1 L6 5.5 L1.2 10" fill="none" stroke="#444950" stroke-width="1.5"/></svg>
<div class="r" style="left:368px;top:681px;width:30px;height:20px;border:1px solid #bec3c9;border-radius:10px;background:#fff;"></div>
<div class="r" style="left:374px;top:685px;width:20px;height:12px;background:#e6e8eb;border-radius:6px;"></div>
<div class="r" style="left:372px;top:686px;width:10px;height:10px;background:#4f5661;border-radius:50%;"></div>
<div class="t" style="left:411px;top:683px;font-size:14px;line-height:14px;font-weight:normal;color:#4b4f56;">Off</div>
<div class="t" style="left:221px;width:400px;text-align:right;top:684px;font-size:14px;line-height:14px;font-weight:normal;color:#1c1e21;letter-spacing:-0.15px;">€555.57</div>
<div class="t" style="left:649px;top:684px;font-size:14px;line-height:14px;font-weight:normal;color:#1c1e21;">€200.00</div>
<div class="t" style="left:649px;top:703px;font-size:12px;line-height:12px;font-weight:normal;color:#606770;">Daily</div>
<div class="t" style="left:434px;width:400px;text-align:right;top:684px;font-size:14px;line-height:14px;font-weight:normal;color:#1c1e21;letter-spacing:-0.15px;">6</div>
<div class="t" style="left:526px;width:400px;text-align:right;top:684px;font-size:14px;line-height:14px;font-weight:normal;color:#1c1e21;letter-spacing:-0.15px;">€46.30</div>
<div class="t" style="left:618px;width:400px;text-align:right;top:684px;font-size:14px;line-height:14px;font-weight:normal;color:#1c1e21;letter-spacing:-0.15px;">€92.60</div>
<div class="t" style="left:724px;width:400px;text-align:right;top:684px;font-size:14px;line-height:14px;font-weight:normal;color:#1c1e21;letter-spacing:-0.15px;">€704.34</div>
<div class="t" style="left:830px;width:400px;text-align:right;top:684px;font-size:14px;line-height:14px;font-weight:normal;color:#1c1e21;letter-spacing:-0.15px;">1.27</div>
<div class="t" style="left:936px;width:400px;text-align:right;top:684px;font-size:14px;line-height:14px;font-weight:normal;color:#1c1e21;letter-spacing:-0.15px;">60,647</div>
<div class="t" style="left:1022px;width:400px;text-align:right;top:684px;font-size:14px;line-height:14px;font-weight:normal;color:#1c1e21;letter-spacing:-0.15px;">1.30</div>
<div class="t" style="left:1101px;width:400px;text-align:right;top:684px;font-size:14px;line-height:14px;font-weight:normal;color:#1c1e21;letter-spacing:-0.15px;">1.09%</div>
<div class="t" style="left:1180px;width:400px;text-align:right;top:684px;font-size:14px;line-height:14px;font-weight:normal;color:#1c1e21;letter-spacing:-0.15px;">1.09%</div>
<div class="t" style="left:1272px;width:400px;text-align:right;top:684px;font-size:14px;line-height:14px;font-weight:normal;color:#1c1e21;letter-spacing:-0.15px;">€9.16</div>
<div class="t" style="left:1364px;width:400px;text-align:right;top:684px;font-size:14px;line-height:14px;font-weight:normal;color:#1c1e21;letter-spacing:-0.15px;">€0.84</div>
<div class="r" style="left:67px;top:285px;width:287px;height:432px;background:#fff;"></div>
<div class="r" style="left:1831px;top:293px;width:7px;height:22px;background:#b4b4b4;border-radius:4px;"></div>
<div class="r" style="left:14px;top:717px;width:1828px;height:5px;background:linear-gradient(#fbfbfb,#dcdcdc);"></div>
<svg style="left:53px;top:733px" width="8" height="11" viewBox="0 0 8 11"><path d="M1.2 1 L6 5.5 L1.2 10" fill="none" stroke="#1c1e21" stroke-width="1.5"/></svg>
<div class="t" style="left:70px;top:729px;font-size:14px;line-height:14px;font-weight:bold;color:#1c1e21;letter-spacing:-0.38px;">Results from 262 campaigns</div>
<svg style="left:255px;top:731px" width="12" height="12" viewBox="0 0 12 12"><circle cx="6" cy="6" r="6" fill="#444950"/><rect x="5.1" y="5" width="1.8" height="4.5" fill="#fff"/><circle cx="6" cy="3.2" r="1" fill="#fff"/></svg>
<div class="t" style="left:70px;top:746px;font-size:12px;line-height:12px;font-weight:normal;color:#606770;">Excludes deleted items</div>
<div class="t" style="left:221px;width:400px;text-align:right;top:729px;font-size:14px;line-height:14px;font-weight:bold;color:#1c1e21;">€26,885.84</div>
<div class="t" style="left:221px;width:400px;text-align:right;top:746px;font-size:12px;line-height:12px;font-weight:normal;color:#606770;letter-spacing:-0.1px;">Total Spent</div>
<div class="t" style="left:434px;width:400px;text-align:right;top:729px;font-size:14px;line-height:14px;font-weight:bold;color:#1c1e21;">711</div>
<div class="t" style="left:434px;width:400px;text-align:right;top:746px;font-size:12px;line-height:12px;font-weight:normal;color:#606770;letter-spacing:-0.1px;">Total</div>
<div class="t" style="left:526px;width:400px;text-align:right;top:729px;font-size:14px;line-height:14px;font-weight:bold;color:#1c1e21;">€11.82</div>
<div class="t" style="left:526px;width:400px;text-align:right;top:746px;font-size:12px;line-height:12px;font-weight:normal;color:#606770;letter-spacing:-0.1px;">Per Action</div>
<div class="t" style="left:618px;width:400px;text-align:right;top:729px;font-size:14px;line-height:14px;font-weight:bold;color:#1c1e21;">€37.81</div>
<div class="t" style="left:618px;width:400px;text-align:right;top:746px;font-size:12px;line-height:12px;font-weight:normal;color:#606770;letter-spacing:-0.1px;">Per Action</div>
<div class="t" style="left:724px;width:400px;text-align:right;top:729px;font-size:14px;line-height:14px;font-weight:bold;color:#1c1e21;">€73,091.04</div>
<div class="t" style="left:724px;width:400px;text-align:right;top:746px;font-size:12px;line-height:12px;font-weight:normal;color:#606770;letter-spacing:-0.1px;">Total</div>
<div class="t" style="left:830px;width:400px;text-align:right;top:729px;font-size:14px;line-height:14px;font-weight:bold;color:#1c1e21;">2.72</div>
<div class="t" style="left:830px;width:400px;text-align:right;top:746px;font-size:12px;line-height:12px;font-weight:normal;color:#606770;letter-spacing:-0.1px;">Average</div>
<div class="t" style="left:936px;width:400px;text-align:right;top:729px;font-size:14px;line-height:14px;font-weight:bold;color:#1c1e21;">2,785,994</div>
<div class="t" style="left:936px;width:400px;text-align:right;top:746px;font-size:12px;line-height:12px;font-weight:normal;color:#606770;letter-spacing:-0.1px;">Total</div>
<div class="t" style="left:1022px;width:400px;text-align:right;top:729px;font-size:14px;line-height:14px;font-weight:bold;color:#1c1e21;">3.48</div>
<div class="t" style="left:1022px;width:400px;text-align:right;top:746px;font-size:12px;line-height:12px;font-weight:normal;color:#606770;letter-spacing:-0.1px;">Per Person</div>
<div class="t" style="left:1101px;width:400px;text-align:right;top:729px;font-size:14px;line-height:14px;font-weight:bold;color:#1c1e21;">0.61%</div>
<div class="t" style="left:1097px;width:400px;text-align:right;top:746px;font-size:12px;line-height:12px;font-weight:normal;color:#606770;letter-spacing:-0.3px;">Per Impres…</div>
<div class="t" style="left:1180px;width:400px;text-align:right;top:729px;font-size:14px;line-height:14px;font-weight:bold;color:#1c1e21;">0.60%</div>
<div class="t" style="left:1176px;width:400px;text-align:right;top:746px;font-size:12px;line-height:12px;font-weight:normal;color:#606770;letter-spacing:-0.3px;">Per Impres…</div>
<div class="t" style="left:1272px;width:400px;text-align:right;top:729px;font-size:14px;line-height:14px;font-weight:bold;color:#1c1e21;">€9.65</div>
<div class="t" style="left:1271px;width:400px;text-align:right;top:746px;font-size:12px;line-height:12px;font-weight:normal;color:#606770;letter-spacing:-0.3px;">Per 1,000 Imp…</div>
<div class="t" style="left:1364px;width:400px;text-align:right;top:729px;font-size:14px;line-height:14px;font-weight:bold;color:#1c1e21;">€1.57</div>
<div class="t" style="left:1364px;width:400px;text-align:right;top:746px;font-size:12px;line-height:12px;font-weight:normal;color:#606770;letter-spacing:-0.1px;">Per Action</div>
<div style="position:absolute;left:1772px;top:720px;width:70px;height:40px;overflow:hidden"><div class="t" style="left:0;width:70px;text-align:right;top:9px;font-size:14px;line-height:14px;font-weight:bold;color:#1c1e21">16</div></div>
<div class="r" style="left:517px;top:721px;width:149px;height:54px;border:4px solid #fc1a17;"></div>
<div class="r" style="left:1044px;top:720px;width:203px;height:55px;border:4px solid #fc1a17;"></div>
<div class="r" style="left:1859px;top:0px;width:1px;height:784px;background:#eaeaea;"></div>
</div></body></html>
